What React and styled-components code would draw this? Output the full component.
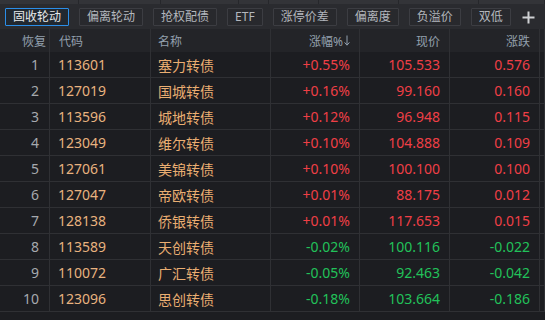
import React from "react";
import styled, { createGlobalStyle } from "styled-components";

const Global = createGlobalStyle`
  html, body { margin: 0; padding: 0; background: #1c1d21; }
  body { font-family: "Noto Sans", "Noto Sans CJK SC", sans-serif; }
  * { box-sizing: border-box; }
`;

const Page = styled.div`
  width: 545px;
  height: 320px;
  overflow: hidden;
  background: #1c1d21;
  display: flex;
  flex-direction: column;
`;

/* thin strip left over from the tab bar above */
const TabStrip = styled.div`
  height: 4px;
  display: flex;
  background: #333438;
`;

const TabCell = styled.div`
  width: ${(p) => p.$w}px;
  flex: ${(p) => (p.$w ? "none" : "1")};
  border-right: 1px solid #26272b;
`;

const Toolbar = styled.div`
  height: 25px;
  background: #2a2b2f;
  display: flex;
  align-items: flex-start;
  padding: 4px 0 0 5px;
  gap: 10px;
`;

const Chip = styled.button`
  height: 18px;
  padding: 0 7px;
  margin: 0;
  font-family: "Noto Sans", "Noto Sans CJK SC", sans-serif;
  font-size: 12px;
  line-height: 16px;
  border-radius: 1px;
  border: 1px solid ${(p) => (p.$active ? "#2b8ee8" : "#3c3d42")};
  background: ${(p) => (p.$active ? "#212830" : "#28292d")};
  color: ${(p) => (p.$active ? "#e6e8ea" : "#b3b7bd")};
  white-space: nowrap;
  cursor: pointer;
`;

const AddButton = styled.button`
  width: 14px;
  height: 18px;
  margin-left: 1px;
  padding: 0;
  border: none;
  background: transparent;
  display: flex;
  align-items: center;
  justify-content: center;
  cursor: pointer;
`;

const COLS = "50px 101px 120px 89px 90px 90px 1fr";

const HeaderRow = styled.div`
  display: grid;
  grid-template-columns: ${COLS};
  height: 23px;
  background: #232428;
`;

const HeadCell = styled.div`
  display: flex;
  align-items: center;
  justify-content: ${(p) => (p.$align === "left" ? "flex-start" : "flex-end")};
  padding: ${(p) => p.$pad};
  font-size: 12px;
  color: #93a0ae;
  border-right: 1px solid #2f3034;
  white-space: nowrap;
`;

const Row = styled.div`
  display: grid;
  grid-template-columns: ${COLS};
  height: 26px;
  border-bottom: 1px solid #2f3034;
`;

const Cell = styled.div`
  display: flex;
  align-items: center;
  justify-content: ${(p) => (p.$align === "left" ? "flex-start" : "flex-end")};
  padding: ${(p) => p.$pad};
  font-size: 14px;
  color: ${(p) => p.$color};
  border-right: 1px solid #2f3034;
  white-space: nowrap;
`;

const SortArrow = () => (
  <svg width="6" height="11" viewBox="0 0 6 11" style={{ marginLeft: 1 }}>
    <path d="M3 0.5 V10" stroke="#93a0ae" strokeWidth="1" fill="none" />
    <path d="M0.6 7.4 L3 10.2 L5.4 7.4" stroke="#93a0ae" strokeWidth="1" fill="none" />
  </svg>
);

const PlusIcon = () => (
  <svg width="13" height="13" viewBox="0 0 13 13">
    <path d="M6.5 0.5 V12.5 M0.5 6.5 H12.5" stroke="#cfd1d4" strokeWidth="2" fill="none" />
  </svg>
);

const tabs = ["固收轮动", "偏离轮动", "抢权配债", "ETF", "涨停价差", "偏离度", "负溢价", "双低"];
const stripCells = [79, 82, 78, 30, 50, 80, 80, 0];

const rows = [
  ["113601", "塞力转债", "+0.55%", "105.533", "0.576"],
  ["127019", "国城转债", "+0.16%", "99.160", "0.160"],
  ["113596", "城地转债", "+0.12%", "96.948", "0.115"],
  ["123049", "维尔转债", "+0.10%", "104.888", "0.109"],
  ["127061", "美锦转债", "+0.10%", "100.100", "0.100"],
  ["127047", "帝欧转债", "+0.01%", "88.175", "0.012"],
  ["128138", "侨银转债", "+0.01%", "117.653", "0.015"],
  ["113589", "天创转债", "-0.02%", "100.116", "-0.022"],
  ["110072", "广汇转债", "-0.05%", "92.463", "-0.042"],
  ["123096", "思创转债", "-0.18%", "103.664", "-0.186"],
];

export default function App() {
  return (
    <Page>
      <Global />
      <TabStrip>
        {stripCells.map((w, i) => (
          <TabCell key={i} $w={w} />
        ))}
      </TabStrip>
      <Toolbar>
        {tabs.map((t, i) => (
          <Chip key={t} $active={i === 0}>
            {t}
          </Chip>
        ))}
        <AddButton>
          <PlusIcon />
        </AddButton>
      </Toolbar>
      <HeaderRow>
        <HeadCell $pad="0 3px 0 0">恢复</HeadCell>
        <HeadCell $align="left" $pad="0 0 0 9px">代码</HeadCell>
        <HeadCell $align="left" $pad="0 0 0 7px">名称</HeadCell>
        <HeadCell $pad="0 9px 0 0">
          涨幅%
          <SortArrow />
        </HeadCell>
        <HeadCell $pad="0 9px 0 0">现价</HeadCell>
        <HeadCell $pad="0 9px 0 0">涨跌</HeadCell>
        <HeadCell />
      </HeaderRow>
      {rows.map(([code, name, pct, price, chg], i) => {
        const color = pct.startsWith("-") ? "#22c15a" : "#ef3f46";
        return (
          <Row key={code}>
            <Cell $pad="0 10px 0 0" $color="#a6a9ae">{i + 1}</Cell>
            <Cell $align="left" $pad="0 0 0 8px" $color="#e8b27f">{code}</Cell>
            <Cell $align="left" $pad="0 0 0 7px" $color="#eaae72">{name}</Cell>
            <Cell $pad="0 9px 0 0" $color={color}>{pct}</Cell>
            <Cell $pad="0 9px 0 0" $color={color}>{price}</Cell>
            <Cell $pad="0 9px 0 0" $color={color}>{chg}</Cell>
            <Cell $color={color} />
          </Row>
        );
      })}
    </Page>
  );
}
